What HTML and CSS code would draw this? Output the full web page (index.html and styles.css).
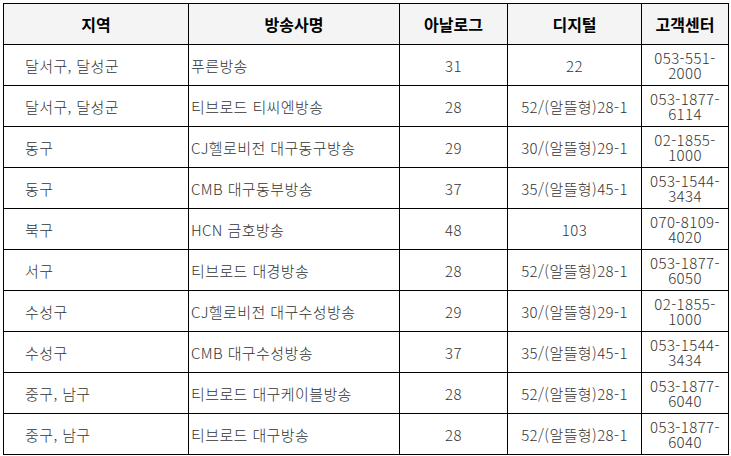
FILE: index.html
```html
<!DOCTYPE html>
<html lang="ko">
<head>
<meta charset="utf-8">
<link rel="stylesheet" href="styles.css">
</head>
<body>
<table class="grid">
  <colgroup>
    <col class="c-area"><col class="c-name"><col class="c-analog"><col class="c-digital"><col class="c-phone">
  </colgroup>
  <thead>
    <tr><th>지역</th><th>방송사명</th><th>아날로그</th><th>디지털</th><th>고객센터</th></tr>
  </thead>
  <tbody>
    <tr><td class="area">달서구, 달성군</td><td class="name">푸른방송</td><td class="num">31</td><td class="num">22</td><td class="phone">053-551-2000</td></tr>
    <tr><td class="area">달서구, 달성군</td><td class="name">티브로드 티씨엔방송</td><td class="num">28</td><td class="num">52/(알뜰형)28-1</td><td class="phone">053-1877-6114</td></tr>
    <tr><td class="area">동구</td><td class="name">CJ헬로비전 대구동구방송</td><td class="num">29</td><td class="num">30/(알뜰형)29-1</td><td class="phone">02-1855-1000</td></tr>
    <tr><td class="area">동구</td><td class="name">CMB 대구동부방송</td><td class="num">37</td><td class="num">35/(알뜰형)45-1</td><td class="phone">053-1544-3434</td></tr>
    <tr><td class="area">북구</td><td class="name">HCN 금호방송</td><td class="num">48</td><td class="num">103</td><td class="phone">070-8109-4020</td></tr>
    <tr><td class="area">서구</td><td class="name">티브로드 대경방송</td><td class="num">28</td><td class="num">52/(알뜰형)28-1</td><td class="phone">053-1877-6050</td></tr>
    <tr><td class="area">수성구</td><td class="name">CJ헬로비전 대구수성방송</td><td class="num">29</td><td class="num">30/(알뜰형)29-1</td><td class="phone">02-1855-1000</td></tr>
    <tr><td class="area">수성구</td><td class="name">CMB 대구수성방송</td><td class="num">37</td><td class="num">35/(알뜰형)45-1</td><td class="phone">053-1544-3434</td></tr>
    <tr><td class="area">중구, 남구</td><td class="name">티브로드 대구케이블방송</td><td class="num">28</td><td class="num">52/(알뜰형)28-1</td><td class="phone">053-1877-6040</td></tr>
    <tr><td class="area">중구, 남구</td><td class="name">티브로드 대구방송</td><td class="num">28</td><td class="num">52/(알뜰형)28-1</td><td class="phone">053-1877-6040</td></tr>
  </tbody>
</table>
</body>
</html>
```

FILE: styles.css
```css
html, body {
  margin: 0;
  padding: 0;
  background: #ffffff;
}
body {
  padding: 3px 0 0 3px;
  font-family: "Noto Sans CJK KR", "Noto Sans", sans-serif;
  font-size: 15px;
  color: #333;
}
.grid {
  border-collapse: collapse;
  table-layout: fixed;
  width: 726px;
}
.c-area { width: 185px; }
.c-name { width: 211px; }
.c-analog { width: 108px; }
.c-digital { width: 134px; }
.c-phone { width: 87px; }

.grid th, .grid td {
  border: 1px solid #000;
  height: 41px;
  padding: 0;
  vertical-align: middle;
  box-sizing: border-box;
}
.grid td {
  font-weight: 300;
  letter-spacing: 0.4px;
}
.grid th {
  background: #f4f4f4;
  font-size: 16px;
  font-weight: bold;
  color: #000;
  text-align: center;
}
.grid td.area {
  text-align: left;
  padding-left: 21px;
}
.grid td.name {
  text-align: left;
  padding-left: 2px;
  white-space: nowrap;
}
.grid td.num {
  text-align: center;
}
.grid td.phone {
  text-align: center;
  line-height: 15px;
  padding: 0 3px;
}
```
